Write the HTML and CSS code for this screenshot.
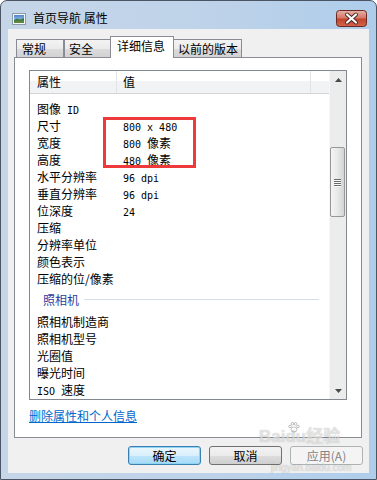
FILE: index.html
```html
<!DOCTYPE html>
<html lang="zh-CN">
<head>
    <meta charset="UTF-8">
    <title>首页导航 属性</title>
    <link rel="stylesheet" href="styles.css">
</head>
<body>
    <div class="window">
        <!-- Barra de título -->
        <div class="titlebar">
            <svg class="app-icon" width="14" height="12" viewBox="0 0 14 12">
                <defs>
                    <linearGradient id="sky" x1="0" y1="0" x2="0" y2="1">
                        <stop offset="0" stop-color="#4f86cc"/>
                        <stop offset="1" stop-color="#b5d8f2"/>
                    </linearGradient>
                </defs>
                <rect x="0.5" y="0.5" width="13" height="11" fill="#f4f6f8" stroke="#8d9aa8"/>
                <rect x="2" y="2" width="10" height="8" fill="url(#sky)"/>
                <path d="M2 7 L5 5.5 L8 6.5 L12 5 L12 10 L2 10 Z" fill="#3d7a46"/>
                <path d="M2 8.5 L6 7.5 L12 8 L12 10 L2 10 Z" fill="#5c8a3a"/>
            </svg>
            <span class="title">首页导航 属性</span>
            <div class="close">
                <svg width="31" height="17" viewBox="0 0 31 17">
                    <defs>
                        <linearGradient id="red" x1="0" y1="0" x2="0" y2="1">
                            <stop offset="0" stop-color="#e8b2a8"/>
                            <stop offset="0.45" stop-color="#d47a6a"/>
                            <stop offset="0.55" stop-color="#c4432f"/>
                            <stop offset="1" stop-color="#d2664c"/>
                        </linearGradient>
                    </defs>
                    <rect x="0.5" y="0.5" width="30" height="16" rx="3" fill="url(#red)" stroke="#6a2a22"/>
                    <path d="M11 4.5 L20 12.5 M20 4.5 L11 12.5" stroke="#4a2420" stroke-width="4" stroke-linecap="round"/>
                    <path d="M11 4.5 L20 12.5 M20 4.5 L11 12.5" stroke="#ffffff" stroke-width="2.2" stroke-linecap="round"/>
                </svg>
            </div>
        </div>

        <div class="client">
            <div class="tabctl">
                <!-- Pestañas -->
                <div class="tabs">
                    <div class="tab tab-general">常规</div>
                    <div class="tab tab-security">安全</div>
                    <div class="tab tab-details active">详细信息</div>
                    <div class="tab tab-versions">以前的版本</div>
                </div>

                <div class="panel">
                    <div class="listview">
                        <div class="lv-main">
                            <div class="lv-header">
                                <div class="col col-name">属性</div>
                                <div class="col col-value">值</div>
                                <div class="col col-rest"></div>
                            </div>
                            <div class="rows">
                                <div class="row"><span class="k">图像<span class="en"> ID</span></span></div>
                                <div class="row"><span class="k">尺寸</span><span class="v en">800 x 480</span></div>
                                <div class="row"><span class="k">宽度</span><span class="v"><span class="en">800 </span>像素</span></div>
                                <div class="row"><span class="k">高度</span><span class="v"><span class="en">480 </span>像素</span></div>
                                <div class="row"><span class="k">水平分辨率</span><span class="v en">96 dpi</span></div>
                                <div class="row"><span class="k">垂直分辨率</span><span class="v en">96 dpi</span></div>
                                <div class="row"><span class="k">位深度</span><span class="v en">24</span></div>
                                <div class="row"><span class="k">压缩</span></div>
                                <div class="row"><span class="k">分辨率单位</span></div>
                                <div class="row"><span class="k">颜色表示</span></div>
                                <div class="row"><span class="k">压缩的位/像素</span></div>
                                <div class="group"><span>照相机</span><span class="group-line"></span></div>
                                <div class="row"><span class="k">照相机制造商</span></div>
                                <div class="row"><span class="k">照相机型号</span></div>
                                <div class="row"><span class="k">光圈值</span></div>
                                <div class="row"><span class="k">曝光时间</span></div>
                                <div class="row"><span class="k"><span class="en">ISO </span>速度</span></div>
                            </div>
                        </div>
                        <!-- Barra de desplazamiento -->
                        <div class="scrollbar">
                            <div class="sb-btn">
                                <svg width="7" height="4" viewBox="0 0 7 4"><path d="M3.5 0 L7 4 L0 4 Z" fill="#4a4a4a"/></svg>
                            </div>
                            <div class="sb-track">
                                <div class="sb-thumb">
                                    <span></span><span></span><span></span><span></span>
                                </div>
                            </div>
                            <div class="sb-btn">
                                <svg width="7" height="4" viewBox="0 0 7 4"><path d="M0 0 L7 0 L3.5 4 Z" fill="#4a4a4a"/></svg>
                            </div>
                        </div>
                    </div>
                    <a class="link" href="#">删除属性和个人信息</a>
                </div>
            </div>

            <!-- Botones -->
            <div class="buttons">
                <button class="btn default">确定</button>
                <button class="btn">取消</button>
                <button class="btn disabled">应用(A)</button>
            </div>
        </div>
    </div>

    <!-- Anotaciones sobre la captura -->
    <div class="highlight"></div>
    <div class="watermark">
        <div class="wm-logo">Bai<span class="du">du<svg class="paw" width="12" height="11" viewBox="0 0 12 11"><g fill="none" stroke="rgba(120,120,120,0.45)" stroke-width="1"><ellipse cx="6" cy="7.5" rx="3" ry="2.5"/><circle cx="2" cy="4.5" r="1.3"/><circle cx="4.5" cy="1.8" r="1.3"/><circle cx="7.5" cy="1.8" r="1.3"/><circle cx="10" cy="4.5" r="1.3"/></g></svg></span>经验</div>
        <div class="wm-url">jingyan.baidu.com</div>
    </div>
</body>
</html>
```

FILE: styles.css
```css
/* Ventana estilo Windows 7 */
* {
    margin: 0;
    padding: 0;
    box-sizing: border-box;
}

body {
    width: 377px;
    height: 480px;
    position: relative;
    overflow: hidden;
    background: #fff;
    font-family: "Noto Sans CJK SC", sans-serif;
    font-size: 12px;
    color: #000;
}

.en {
    font-family: "DejaVu Sans Mono", monospace;
    font-size: 10px;
    white-space: pre;
}

.window {
    width: 377px;
    height: 480px;
    border: 1px solid #4b5563;
    border-radius: 7px 7px 0 0;
    background: linear-gradient(90deg, #c6d6e8 0%, #bdd2e9 60%, #aecdeb 100%);
    display: flex;
    flex-direction: column;
    padding: 0 7px 6px;
}

.titlebar {
    height: 28px;
    padding: 6px 2px 0 2px;
    display: flex;
    align-items: center;
}

.app-icon {
    margin-left: 2px;
    margin-top: 1px;
}

.title {
    margin-left: 7px;
    line-height: 16px;
    color: #000;
}

.close {
    margin-left: auto;
    height: 17px;
}

.client {
    flex: 1;
    background: #f0f0f0;
    display: flex;
    flex-direction: column;
}

.tabctl {
    margin: 7px 7px 0 6px;
}

.tabs {
    display: flex;
    align-items: flex-end;
    height: 21px;
    padding-left: 2px;
}

.tab {
    height: 18px;
    border: 1px solid #898c95;
    border-bottom: none;
    background: linear-gradient(#f3f3f3 0%, #ebebeb 50%, #dcdcdc 51%, #d2d2d2 100%);
    padding: 1px 0 0 5px;
    line-height: 16px;
    white-space: nowrap;
}

.tab-general { width: 48px; }
.tab-security { width: 47px; padding-left: 4px; }
.tab-details { width: 64px; margin-left: -1px; }
.tab-versions { width: 69px; margin-left: -1px; padding-left: 4px; }

.tab.active {
    height: 22px;
    margin-bottom: -1px;
    background: #fff;
    position: relative;
    z-index: 1;
    padding-left: 6px;
}

.panel {
    height: 381px;
    border: 1px solid #898c95;
    background: #fff;
    padding: 12px 14px 0 14px;
}

.listview {
    height: 330px;
    border: 1px solid #828790;
    display: flex;
}

.lv-main {
    flex: 1;
    overflow: hidden;
}

.lv-header {
    height: 23px;
    display: flex;
    border-bottom: 1px solid #d5d5d5;
    background: linear-gradient(#ffffff 0%, #ffffff 45%, #f2f3f5 46%, #f1f2f4 100%);
}

.col {
    line-height: 22px;
    border-right: 1px solid #e3e4e8;
}

.col-name { width: 87px; padding-left: 7px; }
.col-value { width: 194px; padding-left: 6px; }
.col-rest { flex: 1; border-right: none; }

.rows {
    padding-top: 6px;
}

.row {
    display: flex;
    align-items: baseline;
    height: 17px;
    line-height: 17px;
    padding-left: 7px;
    white-space: nowrap;
}

.k {
    width: 86px;
}

.group {
    display: flex;
    align-items: center;
    height: 26px;
    padding: 3px 10px 5px 13px;
    color: #2b3d9e;
    line-height: 17px;
}

.group-line {
    flex: 1;
    height: 1px;
    margin-left: 5px;
    background: #d5dff0;
}

.scrollbar {
    width: 17px;
    background: #ececec;
    border-left: 1px solid #f6f6f6;
    display: flex;
    flex-direction: column;
}

.sb-btn {
    height: 17px;
    display: flex;
    align-items: center;
    justify-content: center;
}

.sb-track {
    flex: 1;
}

.sb-thumb {
    margin: 59px 1px 0 0;
    height: 70px;
    border: 1px solid #979797;
    border-radius: 2px;
    background: linear-gradient(90deg, #f4f4f4 0%, #e8e8e8 50%, #d4d4d4 100%);
    display: flex;
    flex-direction: column;
    align-items: center;
    justify-content: center;
    gap: 1px;
}

.sb-thumb span {
    width: 7px;
    height: 1px;
    background: #6c6c6c;
    box-shadow: 0 1px 0 #fafafa;
}

.link {
    display: block;
    margin-top: 7px;
    line-height: 17px;
    color: #0066cc;
    text-decoration: underline;
    width: max-content;
}

.buttons {
    display: flex;
    justify-content: flex-end;
    gap: 8px;
    margin-top: 8px;
    padding-right: 6px;
}

.btn {
    width: 73px;
    height: 19px;
    border: 1px solid #707070;
    border-radius: 3px;
    background: linear-gradient(#f2f2f2 0%, #ebebeb 50%, #dddddd 51%, #cfcfcf 100%);
    font-family: "Noto Sans CJK SC", sans-serif;
    font-size: 12px;
    line-height: 16px;
    color: #000;
}

.btn.default {
    border-color: #3c7fb1;
    background: linear-gradient(#eaf6fd 0%, #d9f0fc 50%, #bee6fd 51%, #a7d9f5 100%);
    box-shadow: inset 0 0 0 1px #8ed4f5;
}

.btn.disabled {
    border-color: #adb2b5;
    background: #f4f4f4;
    color: #838383;
}

/* Recuadro rojo de la anotación */
.highlight {
    position: absolute;
    left: 103px;
    top: 117px;
    width: 93px;
    height: 51px;
    border: 3px solid #ee3a3a;
}

/* Marca de agua */
.watermark {
    position: absolute;
    left: 259px;
    top: 428px;
    color: rgba(255, 255, 255, 0.6);
    text-shadow: 0 0 1px rgba(0, 0, 0, 0.3);
    pointer-events: none;
}

.wm-logo {
    font-family: "Liberation Sans", "Noto Sans CJK SC", sans-serif;
    font-size: 17px;
    font-weight: bold;
    line-height: 18px;
    display: flex;
    align-items: flex-end;
}

.du {
    position: relative;
}

.paw {
    position: absolute;
    left: 3px;
    top: -6px;
}

.wm-url {
    font-family: "Liberation Sans", sans-serif;
    font-size: 10px;
    line-height: 10px;
    margin: 17px 0 0 12px;
}
```
